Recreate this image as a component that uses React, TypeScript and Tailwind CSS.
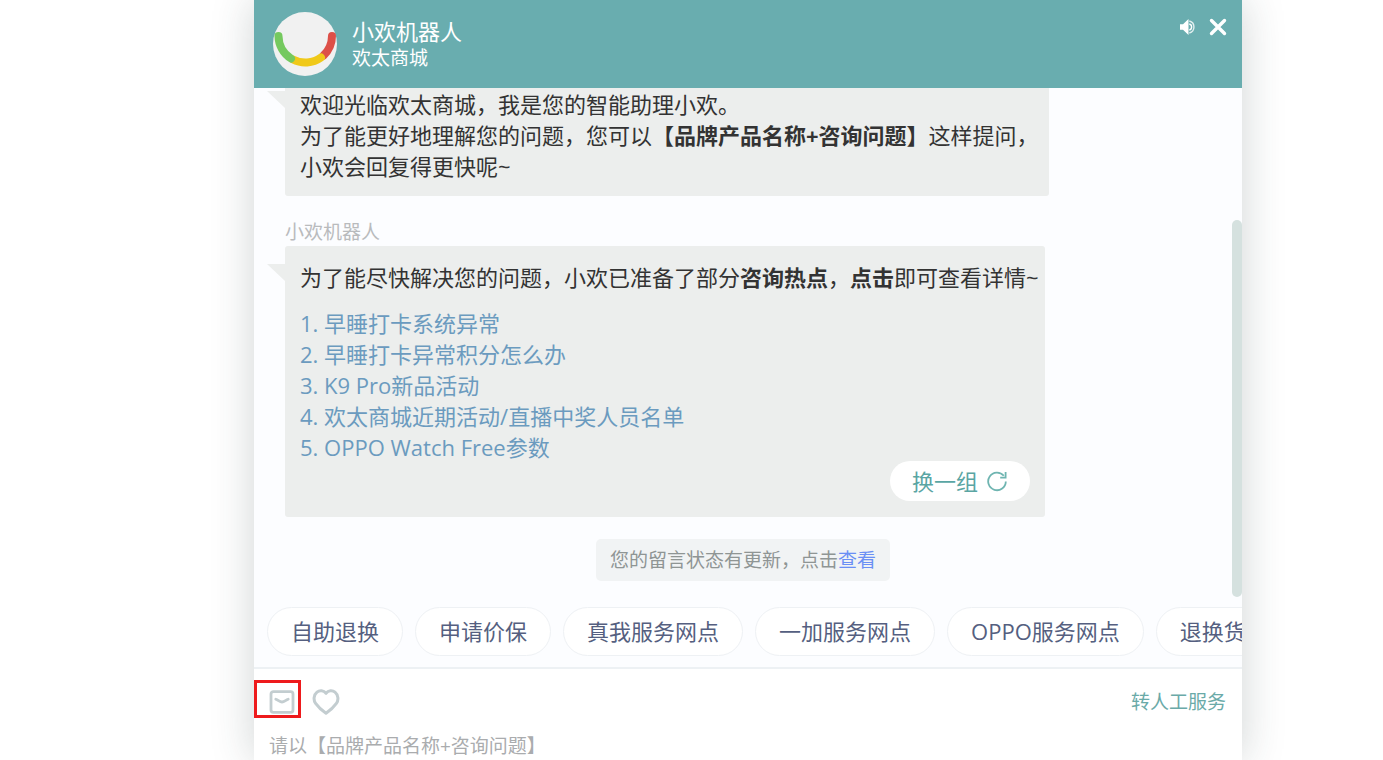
import type { ReactNode } from "react";

const hotTopics = [
  "早睡打卡系统异常",
  "早睡打卡异常积分怎么办",
  "K9 Pro新品活动",
  "欢太商城近期活动/直播中奖人员名单",
  "OPPO Watch Free参数",
];

const shortcuts = [
  "自助退换",
  "申请价保",
  "真我服务网点",
  "一加服务网点",
  "OPPO服务网点",
  "退换货",
];

function Avatar() {
  return (
    <svg viewBox="0 0 64 64" className="size-16 shrink-0" aria-hidden="true">
      <circle cx="32" cy="32" r="32" fill="#f1f1f1" />
      <g fill="none" strokeWidth="8" strokeLinecap="round">
        <path d="M59 24A27 27 0 0 1 50.5 43.5" stroke="#dd5048" />
        <path d="M48 45.500A27 27 0 0 1 20 47.500" stroke="#f0c919" />
        <path d="M5.500 24A27 27 0 0 0 18 46.500" stroke="#75c95f" />
      </g>
    </svg>
  );
}

function SpeakerIcon() {
  return (
    <svg viewBox="0 0 18 18" className="size-[18px]" aria-hidden="true">
      <path d="M1 6.200h3L9.500 1v16L4 11.800H1z" fill="#fff" />
      <g fill="none" stroke="#fff" strokeWidth="1.4">
        <path d="M10.300 6a3.100 3.100 0 0 1 0 6" />
        <path d="M10.300 3a6.200 6.200 0 0 1 0 12" opacity="0.8" />
      </g>
    </svg>
  );
}

function CloseIcon() {
  return (
    <svg viewBox="0 0 18 18" className="size-[18px]" aria-hidden="true">
      <path d="M2.500 2.500l13 13M15.500 2.500l-13 13" stroke="#fff" strokeWidth="3.400" strokeLinecap="round" />
    </svg>
  );
}

function RefreshIcon() {
  return (
    <svg viewBox="0 0 22 22" className="size-[22px]" fill="none" stroke="#6fb5b1" strokeWidth="1.8" aria-hidden="true">
      <path d="M19.800 11.500A8.800 8.800 0 1 1 17.800 5.800" />
      <path d="M19.600 2v5.600h-5.400" />
    </svg>
  );
}

function MailIcon() {
  return (
    <svg viewBox="0 0 26 24" className="h-6 w-[26px]" fill="none" stroke="#c3cdd0" strokeWidth="2.800" strokeLinecap="round" aria-hidden="true">
      <rect x="2" y="1.600" width="22" height="20.800" rx="2.400" />
      <path d="M6.800 9.200c2.600 1 4 2.800 6.200 2.800s3.600-1.800 6.200-2.800" />
    </svg>
  );
}

function HeartIcon() {
  return (
    <svg viewBox="0 0 28 26" className="h-[26px] w-7" fill="none" stroke="#c3cdd0" strokeWidth="3" strokeLinejoin="round" aria-hidden="true">
      <path d="M14 4.300C11.600 1.300 7.600 1 5 3.200 1.600 6 1.200 11 3.600 14.400 6 17.800 10 21.500 14 24.200c4-2.700 8-6.400 10.400-9.800C26.800 11 26.400 6 23 3.200 20.400 1 16.400 1.300 14 4.300z" />
    </svg>
  );
}

function Bubble({ children, className }: { children: ReactNode; className: string }) {
  return (
    <div className={`relative ml-[31px] w-full rounded-[3px] bg-[#eceeed] pl-[15px] pt-4 ${className}`}>
      <svg viewBox="0 0 18 17" className="absolute -left-[18px] top-[18px] h-[17px] w-[18px]" aria-hidden="true">
        <path d="M0 0h18v17z" fill="#eceeed" />
      </svg>
      {children}
    </div>
  );
}

export default function App() {
  return (
    <div className="flex h-screen overflow-hidden bg-white pl-[254px] pr-[141px] font-['Open_Sans','Noto_Sans_CJK_SC',sans-serif] text-[22px] leading-[31px] text-[#333]">
      <main className="flex min-w-0 flex-1 flex-col bg-[#fcfdff] shadow-[0_0_40px_rgba(40,60,60,0.22)]">
        <header className="flex h-[88px] shrink-0 items-center gap-[15px] bg-[#69adaf] pl-[19px] pr-[15px] text-white">
          <Avatar />
          <div className="flex-1">
            <h1 className="leading-7">小欢机器人</h1>
            <p className="text-[19px] leading-[26px]">欢太商城</p>
          </div>
          <div className="flex gap-3 self-start pt-[18px]">
            <button type="button" aria-label="声音">
              <SpeakerIcon />
            </button>
            <button type="button" aria-label="关闭">
              <CloseIcon />
            </button>
          </div>
        </header>

        <div className="flex min-h-0 flex-1">
          <section className="flex min-w-0 flex-1 flex-col justify-end overflow-hidden">
            <Bubble className="max-w-[764px] pb-[14px]">
              <p className="whitespace-nowrap">
                欢迎光临欢太商城，我是您的智能助理小欢。
                <br />
                为了能更好地理解您的问题，您可以<b>【品牌产品名称+咨询问题】</b>这样提问，
                <br />
                小欢会回复得更快呢~
              </p>
            </Bubble>
            <p className="ml-[31px] mt-[22px] text-[19px] leading-7 text-[#b9bbbd]">小欢机器人</p>
            <Bubble className="max-w-[760px] pb-4">
              <p className="whitespace-nowrap">
                为了能尽快解决您的问题，小欢已准备了部分<b>咨询热点</b>，<b>点击</b>即可查看详情~
              </p>
              <ol className="mt-[15px] text-[#6b9bbf]">
                {hotTopics.map((topic, i) => (
                  <li key={topic}>
                    <a href="#topic">
                      {i + 1}. {topic}
                    </a>
                  </li>
                ))}
              </ol>
              <div className="-mt-0.5 flex justify-end pr-[15px]">
                <button type="button" className="flex h-10 items-center gap-2 rounded-full bg-white px-[22px] text-[#5aa5a3]">
                  换一组
                  <RefreshIcon />
                </button>
              </div>
            </Bubble>
            <p className="mb-4 mt-[22px] self-center rounded-[5px] bg-[#f1f3f4] px-[14px] py-[7px] text-[19px] leading-7 text-[#8f9594]">
              您的留言状态有更新，点击
              <a href="#messages" className="text-[#6b8ff5]">
                查看
              </a>
            </p>
          </section>
          <div className="flex w-[10px] shrink-0 flex-col justify-end">
            <div className="h-[74%] rounded-full bg-[#d5e1df]" />
          </div>
        </div>

        <nav className="flex shrink-0 gap-3 overflow-hidden pb-[11px] pl-[13px] pt-[10px] text-[#555f80]">
          {shortcuts.map((label) => (
            <button
              key={label}
              type="button"
              className="h-[49px] shrink-0 rounded-full border border-[#eef1f4] bg-white px-[23px]"
            >
              {label}
            </button>
          ))}
        </nav>

        <footer className="shrink-0 border-t-2 border-[#edf1f4] bg-white">
          <div className="flex items-center gap-[11px] pr-4 pt-[11px]">
            <button
              type="button"
              aria-label="留言"
              className="flex h-[38px] w-[47px] items-center justify-end border-[3px] border-[#ee1a1c] pr-[3px] pt-[5px]"
            >
              <MailIcon />
            </button>
            <button type="button" aria-label="评价" className="pt-[5px]">
              <HeartIcon />
            </button>
            <a href="#agent" className="ml-auto pt-[5px] text-[19px] leading-7 text-[#6aaaa8]">
              转人工服务
            </a>
          </div>
          <textarea
            rows={1}
            aria-label="输入问题"
            placeholder="请以【品牌产品名称+咨询问题】"
            className="mt-[15px] block w-full resize-none overflow-hidden bg-transparent px-[15px] text-[19px] leading-[27px] outline-none placeholder:text-[#aaacae]"
          />
        </footer>
      </main>
    </div>
  );
}
